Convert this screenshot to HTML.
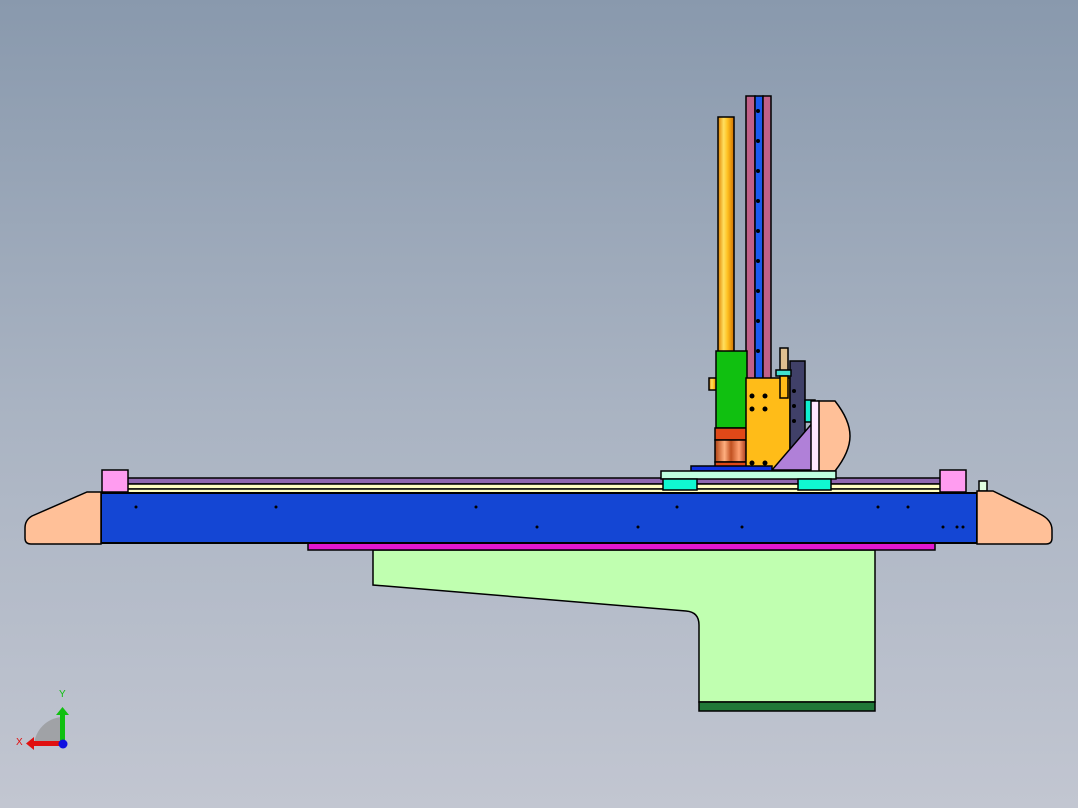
<!DOCTYPE html>
<html><head><meta charset="utf-8"><style>
html,body{margin:0;padding:0;width:1078px;height:808px;overflow:hidden}
body{background:linear-gradient(#8999ad,#a9b3c2 50%,#c2c6d1)}
svg{display:block}
</style></head><body>
<svg width="1078" height="808" viewBox="0 0 1078 808" xmlns="http://www.w3.org/2000/svg">
<defs>
<linearGradient id="gold" x1="0" x2="1"><stop offset="0" stop-color="#e08000"/><stop offset=".35" stop-color="#ffe060"/><stop offset=".6" stop-color="#ffc020"/><stop offset="1" stop-color="#d07000"/></linearGradient>
<linearGradient id="cop" x1="0" x2="1"><stop offset="0" stop-color="#b04010"/><stop offset=".3" stop-color="#ffb080"/><stop offset=".5" stop-color="#c05020"/><stop offset=".75" stop-color="#ffa070"/><stop offset="1" stop-color="#a03010"/></linearGradient>
</defs>
<g stroke="#000" stroke-width="1.5">
<!-- green base -->
<path d="M373 550 H875 V702 H699 V625 Q699 612 686 611 L373 585 Z" fill="#c0ffb0"/>
<rect x="699" y="702" width="176" height="9" fill="#207838"/>
<rect x="308" y="543" width="627" height="7" fill="#e018d0"/>
<!-- rails -->
<rect x="108" y="478" width="857" height="6" fill="#9068b0"/>
<rect x="108" y="484" width="857" height="5" fill="#ffffc0"/>
<rect x="108" y="489" width="857" height="4" fill="#ffffc0"/>
<rect x="102" y="470" width="26" height="22" fill="#ff9cf0"/>
<rect x="940" y="470" width="26" height="22" fill="#ff9cf0"/>
<rect x="979" y="481" width="8" height="10" fill="#e0ffe0"/>
<!-- beam -->
<rect x="101" y="493" width="876" height="50" fill="#1446d4" stroke-width="2"/>
<path d="M101 492 H87 L32 516 Q25 520 25 528 V538 Q25 544 31 544 H101 Z" fill="#ffc098"/>
<path d="M977 491 H993 L1040 514 Q1052 520 1052 530 V538 Q1052 544 1046 544 H977 Z" fill="#ffc098"/>
<!-- column -->
<rect x="718" y="117" width="16" height="236" fill="url(#gold)"/>
<rect x="709" y="378" width="8" height="12" fill="url(#gold)"/>
<rect x="746" y="96" width="9" height="284" fill="#c06088"/>
<rect x="755" y="96" width="8" height="284" fill="#1a5af0"/>
<rect x="763" y="96" width="8" height="284" fill="#c06088"/>
<rect x="716" y="351" width="31" height="77" fill="#10c010"/>
<rect x="715" y="428" width="32" height="12" fill="#e04818"/>
<rect x="715" y="440" width="32" height="22" fill="url(#cop)"/>
<rect x="715" y="462" width="32" height="5" fill="#e04818"/>
<rect x="746" y="378" width="44" height="92" fill="#ffbc18"/>
<rect x="790" y="361" width="15" height="109" fill="#404068"/>
<rect x="805" y="400" width="10" height="22" fill="#10f0d0"/>
<path d="M772 470 L815 420 V470 Z" fill="#b080d8"/>
<path d="M818 401 H835 Q850 420 850 436 Q850 452 835 471 H818 Z" fill="#ffc098"/>
<rect x="811" y="401" width="8" height="73" fill="#ffe8ff"/>
<rect x="780" y="348" width="8" height="25" fill="#e0c090"/>
<rect x="776" y="370" width="15" height="6" fill="#40e0d0"/>
<rect x="780" y="376" width="8" height="22" fill="#ffbc18"/>
<rect x="691" y="466" width="81" height="5" fill="#1030e0"/>
<rect x="661" y="471" width="175" height="8" fill="#c0ffe0"/>
<rect x="663" y="479" width="34" height="11" fill="#10f8d0"/>
<rect x="798" y="479" width="33" height="11" fill="#10f8d0"/>
</g>
<g fill="#000">
<circle cx="758" cy="111" r="2"/><circle cx="758" cy="141" r="2"/><circle cx="758" cy="171" r="2"/><circle cx="758" cy="201" r="2"/><circle cx="758" cy="231" r="2"/><circle cx="758" cy="261" r="2"/><circle cx="758" cy="291" r="2"/><circle cx="758" cy="321" r="2"/><circle cx="758" cy="351" r="2"/>
<circle cx="752" cy="396" r="2.5"/><circle cx="765" cy="396" r="2.5"/><circle cx="752" cy="409" r="2.5"/><circle cx="765" cy="409" r="2.5"/><circle cx="752" cy="463" r="2.5"/><circle cx="765" cy="463" r="2.5"/>
<circle cx="794" cy="391" r="2"/><circle cx="794" cy="406" r="2"/><circle cx="794" cy="421" r="2"/>
<circle cx="136" cy="507" r="1.5"/><circle cx="276" cy="507" r="1.5"/><circle cx="476" cy="507" r="1.5"/><circle cx="677" cy="507" r="1.5"/><circle cx="878" cy="507" r="1.5"/><circle cx="908" cy="507" r="1.5"/>
<circle cx="537" cy="527" r="1.5"/><circle cx="638" cy="527" r="1.5"/><circle cx="742" cy="527" r="1.5"/><circle cx="943" cy="527" r="1.5"/><circle cx="957" cy="527" r="1.5"/><circle cx="963" cy="527" r="1.5"/>
</g>
<!-- triad -->
<path d="M34 745 A30 30 0 0 1 62 717 V745 Z" fill="#8c8c8c" opacity=".6"/>
<rect x="60" y="714" width="5" height="31" fill="#10c010"/>
<path d="M56 715 L62.5 707 L69 715 Z" fill="#10c010"/>
<rect x="33" y="741" width="29" height="5" fill="#e01010"/>
<path d="M34 737 L26 743.5 L34 750 Z" fill="#e01010"/>
<circle cx="63" cy="744" r="4.5" fill="#1010e0"/>
<text x="59" y="697" font-family="Liberation Sans,sans-serif" font-size="10" fill="#10c010">Y</text>
<text x="16" y="745" font-family="Liberation Sans,sans-serif" font-size="10" fill="#e01010">X</text>
</svg>
</body></html>
